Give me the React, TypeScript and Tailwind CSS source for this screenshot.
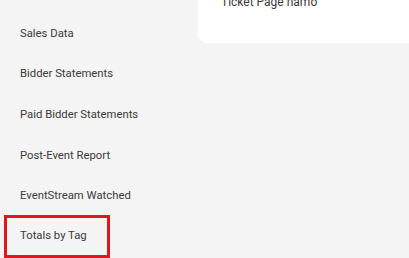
const items = [
  "Sales Data",
  "Bidder Statements",
  "Paid Bidder Statements",
  "Post-Event Report",
  "EventStream Watched",
  "Totals by Tag",
];

export default function App() {
  return (
    <div
      className="flex h-[258px] w-[409px] overflow-hidden bg-[#f4f4f4] text-[#3a3a3a]"
      style={{ fontFamily: "Roboto, 'Liberation Sans', sans-serif" }}
    >
      <nav className="flex w-[198px] shrink-0 flex-col pt-[14px]">
        {items.map((label, i) => {
          const active = i === items.length - 1;
          return (
            <div
              key={label}
              className={
                active
                  ? "ml-[4px] -mt-[2px] flex h-[43px] w-[106px] items-center border-[3px] border-[#e0151d] pl-[13px] text-[11.3px]"
                  : "flex h-[40.7px] items-center pl-[20px] text-[11.3px]"
              }
            >
              {label}
            </div>
          );
        })}
      </nav>
      <div className="flex-1">
        <div className="-mt-[10px] h-[53px] rounded-bl-[9px] bg-white pl-[23px] pt-[3px] text-[12px]">
          Ticket Page namo
        </div>
      </div>
    </div>
  );
}
